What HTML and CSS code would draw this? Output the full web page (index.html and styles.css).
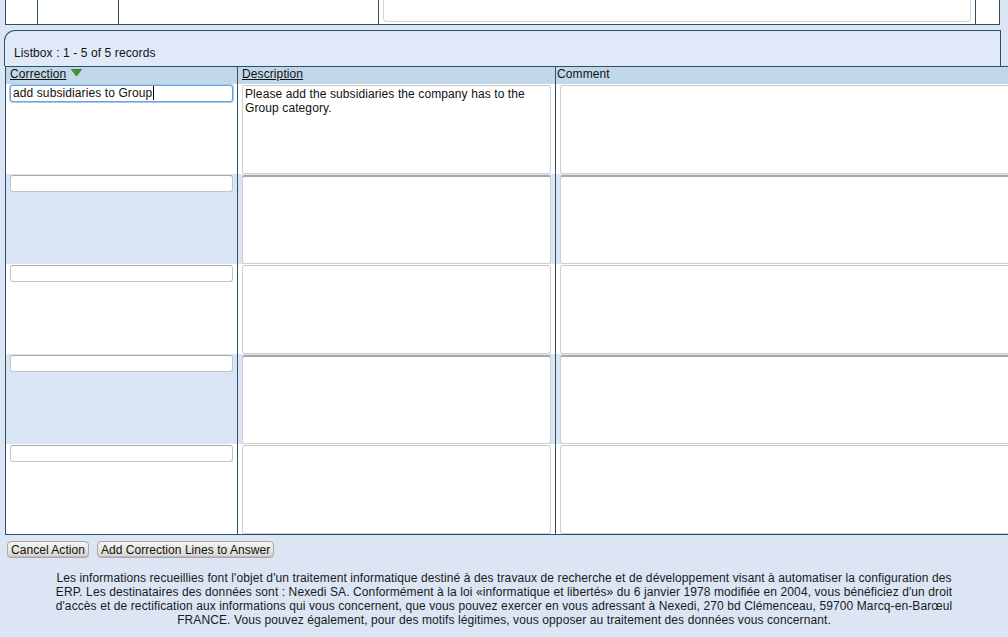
FILE: index.html
```html
<!DOCTYPE html>
<html>
<head>
<meta charset="utf-8">
<link rel="stylesheet" href="styles.css">
</head>
<body>
<div class="top-table">
  <div class="tcell c1"></div>
  <div class="tcell c2"></div>
  <div class="tcell c3"></div>
  <div class="tcell c4"><div class="top-area"></div></div>
  <div class="tcell c5"></div>
</div>

<div class="listbox">
  <div class="listbox-title">Listbox : 1 - 5 of 5 records</div>
</div>

<div class="grid">
  <div class="row head">
    <div class="cell col-a"><span class="link">Correction</span> <svg class="sort" width="11" height="8" viewBox="0 0 11 8"><path d="M0.5 0.5 H10.5 L5.5 7 Z" fill="#3c9a2a" stroke="#2b7a1c" stroke-width="0.8"/></svg></div>
    <div class="cell col-b"><span class="link">Description</span></div>
    <div class="cell col-c">Comment</div>
  </div>
  <div class="row odd">
    <div class="cell col-a"><div class="inp focus">add subsidiaries to Group<span class="caret"></span></div></div>
    <div class="cell col-b"><div class="ta">Please add the subsidiaries the company has to the Group category.</div></div>
    <div class="cell col-c"><div class="ta"></div></div>
  </div>
  <div class="row even">
    <div class="cell col-a"><div class="inp"></div></div>
    <div class="cell col-b"><div class="ta"></div></div>
    <div class="cell col-c"><div class="ta"></div></div>
  </div>
  <div class="row odd">
    <div class="cell col-a"><div class="inp"></div></div>
    <div class="cell col-b"><div class="ta"></div></div>
    <div class="cell col-c"><div class="ta"></div></div>
  </div>
  <div class="row even">
    <div class="cell col-a"><div class="inp"></div></div>
    <div class="cell col-b"><div class="ta"></div></div>
    <div class="cell col-c"><div class="ta"></div></div>
  </div>
  <div class="row odd last">
    <div class="cell col-a"><div class="inp"></div></div>
    <div class="cell col-b"><div class="ta"></div></div>
    <div class="cell col-c"><div class="ta"></div></div>
  </div>
</div>

<div class="actions">
  <button class="btn">Cancel Action</button>
  <button class="btn">Add Correction Lines to Answer</button>
</div>

<p class="legal">Les informations recueillies font l'objet d'un traitement informatique destiné à des travaux de recherche et de développement visant à automatiser la configuration des ERP. Les destinataires des données sont : Nexedi SA. Conformément à la loi «informatique et libertés» du 6 janvier 1978 modifiée en 2004, vous bénéficiez d'un droit d'accès et de rectification aux informations qui vous concernent, que vous pouvez exercer en vous adressant à Nexedi, 270 bd Clémenceau, 59700 Marcq-en-Barœul FRANCE. Vous pouvez également, pour des motifs légitimes, vous opposer au traitement des données vous concernant.</p>
</body>
</html>
```

FILE: styles.css
```css
html, body {
  margin: 0;
  padding: 0;
}
body {
  background: #dbe5f4;
  font-family: "Liberation Sans", Arial, sans-serif;
  font-size: 12px;
  letter-spacing: 0.1px;
  color: #111;
  width: 1008px;
  height: 637px;
  overflow: hidden;
}

.top-table {
  display: flex;
  margin-left: 5px;
  width: 995px;
  border-bottom: 1px solid #2d5064;
  border-right: 1px solid #2d5064;
  box-sizing: border-box;
  height: 25px;
}
.tcell {
  background: #fff;
  border-left: 1px solid #2d5064;
  box-sizing: border-box;
  height: 24px;
}
.c1 { width: 32px; }
.c2 { width: 81px; }
.c3 { width: 260px; }
.c4 { width: 597px; padding: 0 4px 0 4px; }
.c5 { flex: 1; }
.top-area {
  height: 22px;
  border: 1px solid #d4d4d4;
  border-top: none;
  border-radius: 0 0 4px 4px;
  box-sizing: border-box;
}

.listbox {
  margin: 5px 0 0 4px;
  width: 997px;
  height: 36px;
  box-sizing: border-box;
  background: #e1e9f8;
  border: 1px solid #2d5064;
  border-bottom: none;
  border-top-left-radius: 11px;
  display: flex;
  align-items: flex-end;
}
.listbox-title {
  padding: 0 0 6px 9px;
  line-height: 14px;
}

.grid {
  margin-left: 5px;
  width: 1010px;
  border-left: 1px solid #2d5064;
  border-top: 1px solid #2d5064;
  border-bottom: 1px solid #2d5064;
}
.row {
  display: flex;
}
.row.head {
  background: #c1d8eb;
  height: 17px;
}
.row.head .cell {
  line-height: 15px;
}
.row.odd { background: #fff; height: 90px; }
.row.even { background: #d9e4f4; height: 90px; }
.cell {
  box-sizing: border-box;
  height: 100%;
}
.col-a { width: 231px; padding: 1px 4px 0 4px; }
.col-b { width: 318px; border-left: 1px solid #2d5064; padding: 1px 4px 0 4px; }
.col-c { flex: 1; border-left: 1px solid #2d5064; padding: 1px 0 0 4px; }
.row.head .col-a { padding: 0 0 0 4px; }
.row.head .col-b { padding: 0 0 0 4px; }
.row.head .col-c { padding: 0 0 0 1px; }
.link { text-decoration: underline; }
.sort { vertical-align: 1px; margin-left: 1px; }

.inp {
  height: 17px;
  box-sizing: border-box;
  background: #fff;
  border: 1px solid #c4c4c4;
  border-top-color: #a8a8a8;
  border-radius: 3px;
  padding: 0 0 0 2px;
  line-height: 15px;
  white-space: nowrap;
}
.inp.focus {
  border: 1px solid #6fa3d8;
  box-shadow: 0 0 0 1px #a9c9ec;
}
.caret {
  display: inline-block;
  width: 1px;
  height: 14px;
  background: #000;
  vertical-align: -3px;
  margin-left: 1px;
}
.ta {
  height: 89px;
  box-sizing: border-box;
  background: #fff;
  border: 1px solid #cfcfcf;
  border-top: 2px solid #a8a8a8;
  border-radius: 3px;
  padding: 1px 2px 0 2px;
  line-height: 14px;
}
.row.odd .ta { border-top-width: 1px; border-top-color: #c8c8c8; }

.actions {
  display: flex;
  gap: 8px;
  padding: 6px 0 0 7px;
}
.btn {
  font-family: "Liberation Sans", Arial, sans-serif;
  font-size: 12px;
  letter-spacing: 0.04px;
  color: #111;
  height: 17px;
  padding: 0 3px;
  line-height: 14px;
  border: 1px solid #a8a8a8;
  border-radius: 4px;
  background: linear-gradient(#f6f5f3, #d8d5d0);
  box-shadow: inset 0 -1px 0 #c0bdb8;
}

.legal {
  width: 900px;
  margin: 13px 0 0 54px;
  text-align: center;
  line-height: 14px;
  color: #1a1a1a;
}
```
